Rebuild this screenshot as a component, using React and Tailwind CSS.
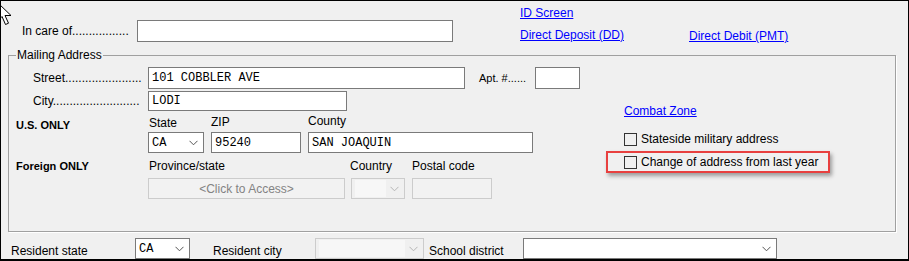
import React from 'react';

const Chevron = ({ color = '#555' }) => (
    <svg width="9" height="6" viewBox="0 0 9 6" className="shrink-0">
        <path d="M0.5 0.8 L4.5 4.8 L8.5 0.8" fill="none" stroke={color} strokeWidth="1" />
    </svg>
);

const Box = ({ w, h = 'h-[22px]', children, mono = true }) => (
    <div className={`${w} ${h} shrink-0 bg-white border border-[#7a7a7a] flex items-center px-[3px] text-[12px] text-black ${mono ? "font-['Liberation_Mono',monospace]" : ''}`}>
        {children}
    </div>
);

const Select = ({ w, value, disabled }) => (
    <div className={`${w} h-[21px] shrink-0 border flex items-center justify-between pl-[3px] pr-[5px] ${disabled ? 'bg-[#f0f0f0] border-[#cccccc]' : 'bg-white border-[#7a7a7a]'}`}>
        {disabled ? <div className="h-[17px] flex-1 bg-[#f7f7f7] mr-[4px]" /> : <span className="font-['Liberation_Mono',monospace] text-[12px]">{value}</span>}
        <Chevron color={disabled ? '#b5b5b5' : '#555'} />
    </div>
);

// label followed by leader dots
const Dotted = ({ label, dots, w }) => (
    <span className={`${w} shrink-0 whitespace-nowrap text-[12px] leading-[14px]`}>
        {label}{'.'.repeat(dots)}
    </span>
);

const Check = () => <span className="w-[13px] h-[13px] shrink-0 bg-[#f0f0f0] border border-[#333]" />;

const Link = ({ children }) => (
    <span className="block text-[#0000ff] underline text-[12px] leading-[14px] whitespace-nowrap">{children}</span>
);

export default function App() {
    return (
        <div className="relative w-[909px] h-[261px] overflow-hidden bg-[#f0f0f0] border border-black border-b-2 text-black font-['Liberation_Sans',Arial,sans-serif]">
            {/* mouse pointer */}
            <svg className="absolute left-[-5px] top-[0px]" width="18" height="28" viewBox="0 0 18 28">
                <path d="M1.5 1.5 L1.5 20 L6 15.5 L9.5 23.5 L12.5 22.2 L9 14.5 L15 14.5 Z" fill="#fff" stroke="#000" strokeWidth="1" />
            </svg>

            {/* TOP STRIP */}
            <div className="flex h-[47px]">
                <div className="flex items-center pt-[19px] pl-[21px] h-[41px]">
                    <Dotted label="In care of" dots={17} w="w-[115px]" />
                    <Box w="w-[316px]" />
                </div>
                <div className="ml-[67px] pt-[5px] flex flex-col">
                    <Link>ID Screen</Link>
                    <div className="flex mt-[8px]">
                        <div className="w-[169px]"><Link>Direct Deposit (DD)</Link></div>
                        <div className="mt-[1px]"><Link>Direct Debit (PMT)</Link></div>
                    </div>
                </div>
            </div>

            {/* MAILING ADDRESS */}
            <fieldset className="ml-[7px] w-[888px] h-[184px] border border-[#a0a0a0] shadow-[1px_1px_0_#ffffff]">
                <legend className="ml-[7px] px-[1px] text-[12px] leading-[14px]">Mailing Address</legend>
                <div className="flex">
                    <div className="w-[597px] shrink-0">
                        <div className="mt-[5px] flex items-center h-[22px]">
                            <span className="ml-[24px]" />
                            <Dotted label="Street" dots={23} w="w-[115px]" />
                            <Box w="w-[317px]">101 COBBLER AVE</Box>
                            <span className="ml-[14px] w-[56px] text-[11px] whitespace-nowrap">Apt. #......</span>
                            <Box w="w-[45px]" />
                        </div>
                        <div className="mt-[2px] flex items-center h-[20px]">
                            <span className="ml-[24px]" />
                            <Dotted label="City" dots={26} w="w-[115px]" />
                            <Box w="w-[199px]" h="h-[20px]">LODI</Box>
                        </div>

                        <div className="mt-[4px] flex">
                            <span className="ml-[7px] w-[132px] pt-[3px] text-[11px] font-bold leading-[14px]">U.S. ONLY</span>
                            <div className="w-[56px] flex flex-col">
                                <span className="pl-[1px] text-[12px] leading-[14px] mt-[1px] mb-[2px]">State</span>
                                <Select w="w-[56px]" value="CA" />
                            </div>
                            <div className="ml-[7px] w-[90px] flex flex-col">
                                <span className="text-[12px] leading-[14px] mb-[3px]">ZIP</span>
                                <Box w="w-[90px]" h="h-[21px]">95240</Box>
                            </div>
                            <div className="ml-[7px] w-[225px] flex flex-col">
                                <span className="text-[12px] leading-[14px] mt-[-1px] mb-[4px]">County</span>
                                <Box w="w-[225px]" h="h-[21px]">SAN JOAQUIN</Box>
                            </div>
                        </div>

                        <div className="mt-[6px] flex">
                            <span className="ml-[7px] w-[132px] text-[11px] font-bold leading-[14px]">Foreign ONLY</span>
                            <div className="w-[197px] flex flex-col">
                                <span className="pl-[1px] text-[12px] leading-[14px] mb-[5px]">Province/state</span>
                                <div className="h-[21px] border border-[#cccccc] bg-[#f2f2f2] flex items-center justify-center text-[12px] text-[#838383]">&lt;Click to Access&gt;</div>
                            </div>
                            <div className="ml-[6px] w-[54px] flex flex-col">
                                <span className="ml-[-1px] text-[12px] leading-[14px] mb-[5px]">Country</span>
                                <Select w="w-[54px]" disabled />
                            </div>
                            <div className="ml-[7px] w-[80px] flex flex-col">
                                <span className="text-[12px] leading-[14px] mb-[5px] whitespace-nowrap">Postal code</span>
                                <div className="h-[21px] border border-[#cccccc] bg-[#f2f2f2]" />
                            </div>
                        </div>
                    </div>

                    <div className="flex flex-col">
                        <div className="mt-[42px] pl-[18px]"><Link>Combat Zone</Link></div>
                        <div className="mt-[14px] pl-[18px] flex items-center gap-[4px] h-[14px]">
                            <Check />
                            <span className="text-[12px] leading-[14px] whitespace-nowrap">Stateside military address</span>
                        </div>
                        <div className="mt-[5px] w-[224px] h-[22px] border-2 border-[#e8403f] shadow-[2px_3px_4px_rgba(0,0,0,0.35)] flex items-center gap-[4px] pl-[16px]">
                            <Check />
                            <span className="text-[12px] leading-[14px] whitespace-nowrap">Change of address from last year</span>
                        </div>
                    </div>
                </div>
            </fieldset>

            {/* RESIDENT STRIP */}
            <div className="mt-[6px] flex items-center h-[21px]">
                <span className="ml-[10px] w-[124px] mt-[4px] text-[12px] leading-[14px]">Resident state</span>
                <Select w="w-[55px]" value="CA" />
                <span className="ml-[23px] w-[102px] mt-[4px] text-[12px] leading-[14px]">Resident city</span>
                <Select w="w-[109px]" disabled />
                <span className="ml-[5px] w-[94px] mt-[4px] text-[12px] leading-[14px]">School district</span>
                <Select w="w-[254px]" value="" />
            </div>
        </div>
    );
}
